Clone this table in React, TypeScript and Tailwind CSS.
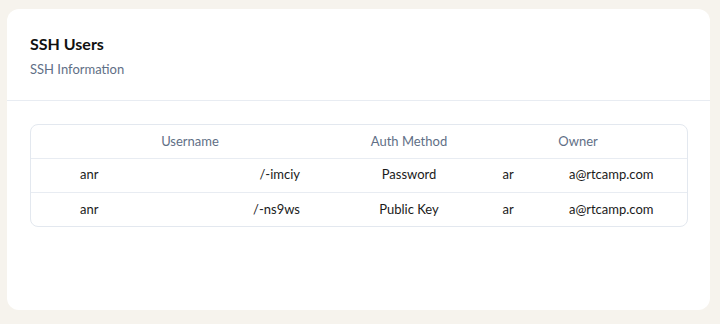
import React from "react";

const rows = [
  { user: ["anr", "/-imciy"], auth: "Password", owner: ["ar", "a@rtcamp.com"] },
  { user: ["anr", "/-ns9ws"], auth: "Public Key", owner: ["ar", "a@rtcamp.com"] },
];

export default function App() {
  return (
    <div
      className="w-[720px] h-[324px] bg-[#f6f3ed] pl-[7px] pr-[10px] pt-[9px] pb-[14px]"
      style={{ fontFamily: "Lato, 'Noto Sans', sans-serif" }}
    >
      <div className="h-full bg-white rounded-[12px] flex flex-col">
        <div className="h-[92px] px-[23px] pt-[25px] border-b border-[#e8ecf2] shrink-0">
          <div className="text-[16px] leading-[20px] font-bold text-[#111]">SSH Users</div>
          <div className="mt-[7px] text-[13px] leading-[16px] text-[#5f6f86]">SSH Information</div>
        </div>
        <div className="mt-[23px] ml-[23px] mr-[22px] border border-[#e3e8ef] rounded-[8px] overflow-hidden">
          <table className="w-full border-collapse text-[13px]">
            <thead>
              <tr className="h-[33px]">
                <th className="w-[318px] font-normal text-[#5f6f86] text-center">Username</th>
                <th className="w-[120px] font-normal text-[#5f6f86] text-center">Auth Method</th>
                <th className="font-normal text-[#5f6f86] text-center">Owner</th>
              </tr>
            </thead>
            <tbody>
              {rows.map((r, i) => (
                <tr key={i} className="h-[34px] border-t border-[#e8ecf2] text-[#1a1a1a]">
                  <td className="text-center">
                    <span className="inline-flex w-[220px] justify-between items-center">
                      <span>{r.user[0]}</span>
                      <span>{r.user[1]}</span>
                    </span>
                  </td>
                  <td className="text-center">{r.auth}</td>
                  <td className="text-center">
                    <span className="inline-flex w-[151px] justify-between items-center">
                      <span>{r.owner[0]}</span>
                      <span>{r.owner[1]}</span>
                    </span>
                  </td>
                </tr>
              ))}
            </tbody>
          </table>
        </div>
      </div>
    </div>
  );
}
